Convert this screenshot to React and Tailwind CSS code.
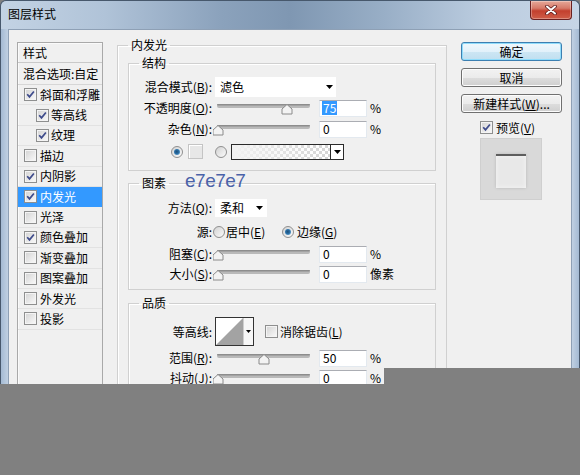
import React from "react";

const U = ({ children }) => <span className="underline underline-offset-[1px]">{children}</span>;

function CheckBox({ checked }) {
  return (
    <span className="flex h-[13px] w-[13px] shrink-0 items-center justify-center border border-[#8e8f8f] bg-[#f4f4f4] p-[1px]">
      <span className="flex h-full w-full items-center justify-center bg-[linear-gradient(135deg,#d6d6d6,#f7f7f7)]">
        {checked && (
          <svg width="9" height="9" viewBox="0 0 9 9">
            <path d="M1.2 4.2 L3.5 6.9 L7.9 1.5" fill="none" stroke="#3f4c8c" strokeWidth="1.7" />
          </svg>
        )}
      </span>
    </span>
  );
}

function Radio({ on }) {
  return (
    <span className="flex h-[12px] w-[12px] shrink-0 items-center justify-center rounded-full border border-[#8f8f8f] bg-[linear-gradient(135deg,#d2d2d2,#fbfbfb)]">
      {on && (
        <span className="h-[6px] w-[6px] rounded-full bg-[radial-gradient(circle_at_45%_45%,#1d4e78_0%,#2a6fa6_45%,#8cc8ee_100%)]" />
      )}
    </span>
  );
}

function Arrow() {
  return (
    <svg width="7" height="4" viewBox="0 0 7 4" className="shrink-0">
      <path d="M0 0H7L3.5 4Z" fill="#000" />
    </svg>
  );
}

function Slider({ v, h }) {
  const cx = 5 + v * 92;
  const ty = h / 2 - 3;
  return (
    <svg width="102" height={h} className="ml-[1px] block shrink-0">
      <rect x="4" y={ty - 1} width="93" height="4" rx="2" fill="#b9b9b9" />
      <rect x="4" y={ty - 1} width="93" height="1.5" rx="0.75" fill="#8d8d8d" />
      <path
        d={`M${cx - 5} ${ty + 9} V${ty + 4} L${cx} ${ty - 0.5} L${cx + 5} ${ty + 4} V${ty + 9} Z`}
        fill="#f3f3f3"
        stroke="#8a8a8a"
      />
    </svg>
  );
}

function Num({ v, sel }) {
  return (
    <span className="ml-[4px] flex h-[17px] w-[48px] shrink-0 items-center border border-[#e3e9ef] border-t-[#abadb3] bg-white pl-[2px]">
      <span className={sel ? "bg-[#3399ff] px-[1px] leading-[14px] text-white" : "px-[1px] leading-[14px]"}>{v}</span>
    </span>
  );
}

function Label({ children }) {
  return <span className="w-[83px] shrink-0 whitespace-nowrap text-right leading-[16px]">{children}</span>;
}

function Btn({ children, def, className }) {
  return (
    <div
      className={`flex h-[19px] items-center justify-center rounded-[3px] border leading-[16px] ${
        def
          ? "border-[#3c7fb1] bg-[linear-gradient(180deg,#f0f8fc_0%,#e2f1fa_50%,#cde6f4_51%,#c0dff0_100%)] shadow-[inset_0_0_0_1px_#8fdcfb]"
          : "border-[#707070] bg-[linear-gradient(180deg,#f2f2f2_0%,#ebebeb_50%,#dddddd_51%,#cfcfcf_100%)] shadow-[inset_0_0_0_1px_#fcfcfc]"
      } ${className || ""}`}
    >
      {children}
    </div>
  );
}

const items = [
  { t: "斜面和浮雕", c: true },
  { t: "等高线", c: true, ind: true },
  { t: "纹理", c: true, ind: true },
  { t: "描边", c: false },
  { t: "内阴影", c: true },
  { t: "内发光", c: true, sel: true },
  { t: "光泽", c: false },
  { t: "颜色叠加", c: true },
  { t: "渐变叠加", c: false },
  { t: "图案叠加", c: false },
  { t: "外发光", c: false },
  { t: "投影", c: false },
];

export default function App() {
  return (
    <div className="relative h-[475px] w-[580px] overflow-hidden bg-[#808080] font-['Noto_Sans_CJK_SC',sans-serif] text-[12px] text-black">
      <div className="flex h-[384px] flex-col overflow-hidden">
        {/* title bar */}
        <div className="flex h-[29px] shrink-0 items-start justify-between rounded-t-[6px] border border-b-0 border-[#47586c] bg-[linear-gradient(90deg,#c3d3e4_0%,#b0c3d8_18%,#8ba2bc_38%,#7f97b2_50%,#98aec6_66%,#bccde0_84%,#c6d5e6_100%)]">
          <span className="ml-[7px] mt-[5px] leading-[16px]">图层样式</span>
          <div className="mr-[7px] flex h-[19px] w-[42px] items-center justify-center rounded-b-[4px] border border-t-0 border-[#6a2020] bg-[linear-gradient(180deg,#e6a898_0%,#d67a69_40%,#c3402e_55%,#cf5d48_100%)] shadow-[inset_0_0_0_1px_rgba(255,255,255,0.3)]">
            <svg width="12" height="10" viewBox="0 0 12 10">
              <path d="M2 1.5 L10 8.5 M10 1.5 L2 8.5" stroke="#5a1a1a" strokeWidth="3.6" strokeLinecap="round" />
              <path d="M2 1.5 L10 8.5 M10 1.5 L2 8.5" stroke="#ffffff" strokeWidth="2" strokeLinecap="round" />
            </svg>
          </div>
        </div>
        {/* body */}
        <div className="flex min-h-0 flex-1">
          <div className="w-[8px] shrink-0 border-l border-[#47586c] bg-[linear-gradient(90deg,#a4bad3,#c0d0e2)]" />
          <div className="flex min-w-0 flex-1 overflow-hidden border border-b-0 border-[#8ea0b5] bg-[#f0f0f0] pl-[8px] pt-[7px]">
            {/* left list */}
            <div className="mt-[5px] h-[400px] w-[86px] shrink-0 border border-[#a9a9a9] bg-[#f0f0f0] shadow-[inset_1px_1px_0_#fafafa]">
              <div className="flex h-[20px] items-center border-b border-[#c9c9c9] pl-[5px] leading-[16px]">样式</div>
              <div className="flex h-[22px] items-center border-b border-[#d6d6d6] pl-[5px] leading-[16px]">混合选项:自定</div>
              {items.map((it) => (
                <div
                  key={it.t}
                  className={`flex h-[20.4px] items-center border-b ${it.ind ? "gap-[2px] pl-[18px]" : "gap-[3px] pl-[6px]"} ${
                    it.sel ? "border-[#3399ff] bg-[#3399ff] text-white" : "border-[#e2e2e2]"
                  }`}
                >
                  <CheckBox checked={it.c} />
                  <span className="leading-[16px]">{it.t}</span>
                </div>
              ))}
            </div>

            {/* middle */}
            <fieldset className="ml-[14px] h-[400px] w-[330px] shrink-0 border border-[#d0d0d0] px-[10px] shadow-[inset_1px_1px_0_#fff]">
              <legend className="px-[3px] leading-[16px]">内发光</legend>

              <fieldset className="mt-[2px] border border-[#d0d0d0] pb-[10px] pt-[6px] shadow-[inset_1px_1px_0_#fff]">
                <legend className="ml-[10px] px-[3px] leading-[16px]">结构</legend>
                <div className="flex h-[20px] items-center">
                  <Label>
                    混合模式(<U>B</U>):
                  </Label>
                  <div className="ml-[3px] flex h-[20px] w-[121px] items-center justify-between bg-white pl-[5px] pr-[3px]">
                    <span className="leading-[16px]">滤色</span>
                    <Arrow />
                  </div>
                </div>
                <div className="mt-[1px] flex h-[20px] items-center">
                  <Label>
                    不透明度(<U>O</U>):
                  </Label>
                  <Slider v={0.75} h={20} />
                  <Num v="75" sel />
                  <span className="ml-[3px] leading-[16px]">%</span>
                </div>
                <div className="mt-[1px] flex h-[20px] items-center">
                  <Label>
                    杂色(<U>N</U>):
                  </Label>
                  <Slider v={0} h={20} />
                  <Num v="0" />
                  <span className="ml-[3px] leading-[16px]">%</span>
                </div>
                <div className="mt-[4px] flex h-[17px] items-center">
                  <span className="ml-[42px]">
                    <Radio on />
                  </span>
                  <span className="ml-[5px] h-[15px] w-[15px] shrink-0 border border-[#c4c4c4] bg-[#e7e7e7] shadow-[inset_1px_1px_0_#fff]" />
                  <span className="ml-[12px]">
                    <Radio />
                  </span>
                  <div className="ml-[4px] flex h-[16px] border border-[#2a2a2a]">
                    <div className="h-full w-[98px] bg-[image:linear-gradient(90deg,#f2f2f2_0%,rgba(242,242,242,0)_100%),repeating-conic-gradient(#d4d4d4_0_25%,#ffffff_0_50%)] bg-[length:100%_100%,6px_6px]" />
                    <div className="flex w-[13px] items-center justify-center border-l border-[#2a2a2a] bg-white">
                      <Arrow />
                    </div>
                  </div>
                </div>
              </fieldset>

              <fieldset className="mt-[4px] border border-[#d0d0d0] pb-[6px] pt-[8px] shadow-[inset_1px_1px_0_#fff]">
                <legend className="ml-[10px] px-[3px] leading-[16px]">图素</legend>
                <div className="flex h-[18px] items-center">
                  <Label>
                    方法(<U>Q</U>):
                  </Label>
                  <div className="ml-[3px] flex h-[18px] w-[52px] items-center justify-between bg-white pl-[5px] pr-[4px]">
                    <span className="leading-[16px]">柔和</span>
                    <Arrow />
                  </div>
                </div>
                <div className="mt-[6px] flex h-[18px] items-center">
                  <Label>源:</Label>
                  <div className="ml-[1px] flex w-[69px] shrink-0 items-center">
                    <Radio />
                    <span className="ml-[1px] leading-[16px]">
                      居中(<U>E</U>)
                    </span>
                  </div>
                  <Radio on />
                  <span className="ml-[3px] leading-[16px]">
                    边缘(<U>G</U>)
                  </span>
                </div>
                <div className="mt-[4px] flex h-[18px] items-center">
                  <Label>
                    阻塞(<U>C</U>):
                  </Label>
                  <Slider v={0} h={18} />
                  <Num v="0" />
                  <span className="ml-[3px] leading-[16px]">%</span>
                </div>
                <div className="mt-[2px] flex h-[18px] items-center">
                  <Label>
                    大小(<U>S</U>):
                  </Label>
                  <Slider v={0} h={18} />
                  <Num v="0" />
                  <span className="ml-[3px] leading-[16px]">像素</span>
                </div>
              </fieldset>

              <fieldset className="mt-[5px] border border-[#d0d0d0] pb-[10px] pt-[6px] shadow-[inset_1px_1px_0_#fff]">
                <legend className="ml-[10px] px-[3px] leading-[16px]">品质</legend>
                <div className="flex h-[29px] items-center">
                  <Label>等高线:</Label>
                  <div className="ml-[3px] flex h-[29px] w-[39px] shrink-0 border border-[#333333] bg-white">
                    <svg width="27" height="27" className="block">
                      <polygon points="0,27 27,0 27,27" fill="#a3a3a3" />
                    </svg>
                    <div className="flex flex-1 items-center justify-center border-l border-[#cfcfcf] bg-[#f7f7f7]">
                      <svg width="5" height="3" viewBox="0 0 5 3">
                        <path d="M0 0H5L2.5 3Z" fill="#000" />
                      </svg>
                    </div>
                  </div>
                  <span className="ml-[11px]">
                    <CheckBox />
                  </span>
                  <span className="ml-[2px] leading-[16px]">
                    消除锯齿(<U>L</U>)
                  </span>
                </div>
                <div className="mt-[3px] flex h-[18px] items-center">
                  <Label>
                    范围(<U>R</U>):
                  </Label>
                  <Slider v={0.5} h={18} />
                  <Num v="50" />
                  <span className="ml-[3px] leading-[16px]">%</span>
                </div>
                <div className="mt-[2px] flex h-[18px] items-center">
                  <Label>
                    抖动(<U>J</U>):
                  </Label>
                  <Slider v={0} h={18} />
                  <Num v="0" />
                  <span className="ml-[3px] leading-[16px]">%</span>
                </div>
              </fieldset>
            </fieldset>

            {/* right column */}
            <div className="ml-[14px] mt-[5px] flex w-[101px] shrink-0 flex-col">
              <Btn def>确定</Btn>
              <Btn className="mt-[7px]">取消</Btn>
              <Btn className="mt-[7px]">
                新建样式(<U>W</U>)...
              </Btn>
              <div className="mt-[8px] flex h-[13px] items-center pl-[19px]">
                <CheckBox checked />
                <span className="ml-[3px] leading-[16px]">
                  预览(<U>V</U>)
                </span>
              </div>
              <div className="ml-[19px] mt-[4px] flex h-[62px] w-[62px] justify-center border border-[#cfcfcf] bg-[#d9d9d9] pt-[15px]">
                <div className="h-[34px] w-[30px] border-t-2 border-[#5e5e5e] bg-[#e8e8e8] shadow-[0_0_3px_#b8b8b8,inset_0_0_4px_#f6f6f6]" />
              </div>
            </div>
          </div>
          <div className="w-[8px] shrink-0 border-r border-[#47586c] bg-[linear-gradient(90deg,#c0d0e2,#a4bad3)]" />
        </div>
      </div>

      {/* annotation */}
      <span className="absolute left-[185px] top-[171px] font-['Liberation_Sans',sans-serif] text-[19px] leading-[19px] tracking-[-0.5px] text-[#4a62a8]">
        e7e7e7
      </span>
      {/* grey cover */}
      <div className="absolute left-[384px] top-[368px] h-[16px] w-[196px] bg-[#808080]" />
    </div>
  );
}
